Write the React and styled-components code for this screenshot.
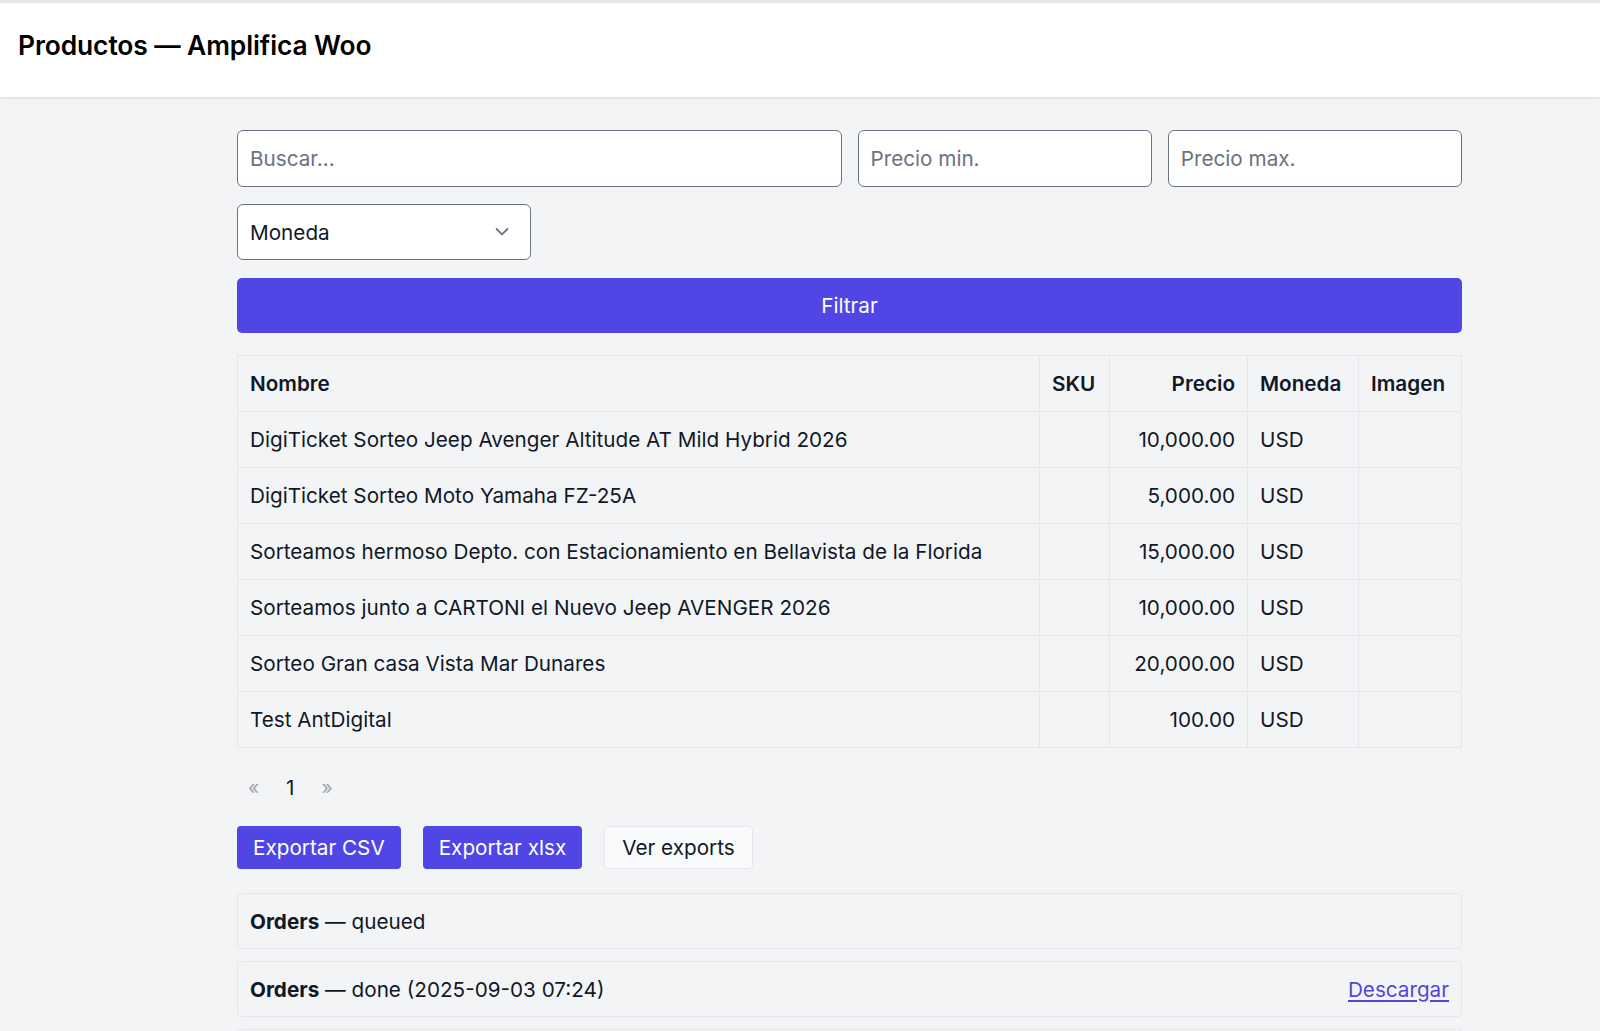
import styled, { createGlobalStyle } from "styled-components";

const GlobalStyle = createGlobalStyle`
  html, body {
    margin: 0;
    padding: 0;
    background: #f3f4f6;
    font-family: Inter, "Noto Sans", sans-serif;
    color: #111827;
  }
  * { box-sizing: border-box; }
`;

const TopBar = styled.header`
  background: #ffffff;
  border-top: 3px solid #e5e7eb;
  height: 97px;
  display: flex;
  align-items: flex-start;
  padding: 26px 18px 0;
  box-shadow: 0 1px 3px rgba(0, 0, 0, 0.12);
`;

const Title = styled.h1`
  margin: 0;
  font-size: 26.4px;
  line-height: 32px;
  font-weight: 600;
  letter-spacing: -0.1px;
  color: #000;
`;

const Main = styled.main`
  padding: 33px 138px 0 237px;
`;

const FilterGrid = styled.div`
  display: grid;
  grid-template-columns: repeat(4, minmax(0, 1fr));
  gap: 17px 16px;
`;

const Input = styled.input`
  grid-column: span ${(p) => p.$span || 1};
  width: 100%;
  height: 57px;
  padding: 0 12px;
  border: 1px solid #6b7280;
  border-radius: 6px;
  background: #fff;
  font-family: inherit;
  font-size: 20.7px;
  color: #111827;
  &::placeholder { color: #6b7280; }
`;

const SelectWrap = styled.div`
  position: relative;
  height: 56px;
`;

const Select = styled.select`
  appearance: none;
  width: 100%;
  height: 100%;
  padding: 0 12px;
  border: 1px solid #6b7280;
  border-radius: 6px;
  background: #fff;
  font-family: inherit;
  font-size: 20.7px;
  color: #111827;
`;

const Chevron = styled.svg`
  position: absolute;
  right: 17px;
  top: 50%;
  transform: translateY(-50%);
  pointer-events: none;
`;

const PrimaryButton = styled.button`
  border: 0;
  background: #4f46e5;
  color: #fff;
  font-family: inherit;
  font-size: 20.7px;
  border-radius: 4px;
  cursor: pointer;
  ${(p) => p.$block ? "grid-column: 1 / -1; height: 55px; margin-top: 1px; border-radius: 5px;" : "height: 43px; padding: 0 16px;"}
`;

const GhostButton = styled.button`
  height: 43px;
  padding: 0 17px;
  background: #f9fafb;
  border: 1px solid #e5e7eb;
  border-radius: 4px;
  font-family: inherit;
  font-size: 20.7px;
  color: #111827;
`;

const Table = styled.table`
  width: 100%;
  margin-top: 22px;
  border-collapse: collapse;
  border: 1px solid #e5e7eb;
  font-size: 20.7px;
`;

const Th = styled.th`
  height: 56px;
  padding: 0 12px;
  border: 1px solid #e5e7eb;
  font-weight: 600;
  text-align: ${(p) => p.$align || "left"};
  width: ${(p) => p.$w || "auto"};
`;

const Td = styled.td`
  height: 56px;
  padding: 0 12px;
  border: 1px solid #e5e7eb;
  text-align: ${(p) => p.$align || "left"};
`;

const Pager = styled.nav`
  display: flex;
  align-items: center;
  gap: 27px;
  height: 78px;
  padding-left: 11px;
  font-size: 20.7px;
`;

const PagerArrow = styled.span`
  color: #9ca3af;
  font-size: 19px;
`;

const Actions = styled.div`
  display: flex;
  gap: 22px;
`;

const ExportList = styled.div`
  display: flex;
  flex-direction: column;
  gap: 12px;
  margin-top: 24px;
`;

const ExportItem = styled.div`
  display: flex;
  align-items: center;
  justify-content: space-between;
  height: 56px;
  padding: 0 12px;
  border: 1px solid #e5e7eb;
  border-radius: 4px;
  font-size: 20.7px;
`;

const Link = styled.a`
  color: #5146d8;
  text-decoration: underline;
  text-underline-offset: 3px;
`;

const products = [
  ["DigiTicket Sorteo Jeep Avenger Altitude AT Mild Hybrid 2026", "10,000.00"],
  ["DigiTicket Sorteo Moto Yamaha FZ-25A", "5,000.00"],
  ["Sorteamos hermoso Depto. con Estacionamiento en Bellavista de la Florida", "15,000.00"],
  ["Sorteamos junto a CARTONI el Nuevo Jeep AVENGER 2026", "10,000.00"],
  ["Sorteo Gran casa Vista Mar Dunares", "20,000.00"],
  ["Test AntDigital", "100.00"],
];

const exportsList = [
  { status: "queued" },
  { status: "done (2025-09-03 07:24)", link: true },
  { status: "done (2025-09-03 07:20)", link: true },
];

export default function App() {
  return (
    <>
      <GlobalStyle />
      <TopBar>
        <Title>Productos — Amplifica Woo</Title>
      </TopBar>
      <Main>
        <FilterGrid>
          <Input $span={2} placeholder="Buscar..." />
          <Input placeholder="Precio min." />
          <Input placeholder="Precio max." />
          <SelectWrap>
            <Select defaultValue="">
              <option value="">Moneda</option>
              <option value="USD">USD</option>
            </Select>
            <Chevron width="24" height="24" viewBox="0 0 20 20" fill="none">
              <path d="M5.5 7.5l4.5 4.5 4.5-4.5" stroke="#6b7280" strokeWidth="1.5" strokeLinecap="round" strokeLinejoin="round" />
            </Chevron>
          </SelectWrap>
          <PrimaryButton $block>Filtrar</PrimaryButton>
        </FilterGrid>

        <Table>
          <thead>
            <tr>
              <Th>Nombre</Th>
              <Th $w="70px">SKU</Th>
              <Th $w="138px" $align="right">Precio</Th>
              <Th $w="111px">Moneda</Th>
              <Th $w="103px">Imagen</Th>
            </tr>
          </thead>
          <tbody>
            {products.map(([name, price]) => (
              <tr key={name}>
                <Td>{name}</Td>
                <Td></Td>
                <Td $align="right">{price}</Td>
                <Td>USD</Td>
                <Td></Td>
              </tr>
            ))}
          </tbody>
        </Table>

        <Pager>
          <PagerArrow>«</PagerArrow>
          <span>1</span>
          <PagerArrow>»</PagerArrow>
        </Pager>

        <Actions>
          <PrimaryButton>Exportar CSV</PrimaryButton>
          <PrimaryButton>Exportar xlsx</PrimaryButton>
          <GhostButton>Ver exports</GhostButton>
        </Actions>

        <ExportList>
          {exportsList.map((e, i) => (
            <ExportItem key={i}>
              <span>
                <b>Orders</b> — {e.status}
              </span>
              {e.link && <Link href="#">Descargar</Link>}
            </ExportItem>
          ))}
        </ExportList>
      </Main>
    </>
  );
}
